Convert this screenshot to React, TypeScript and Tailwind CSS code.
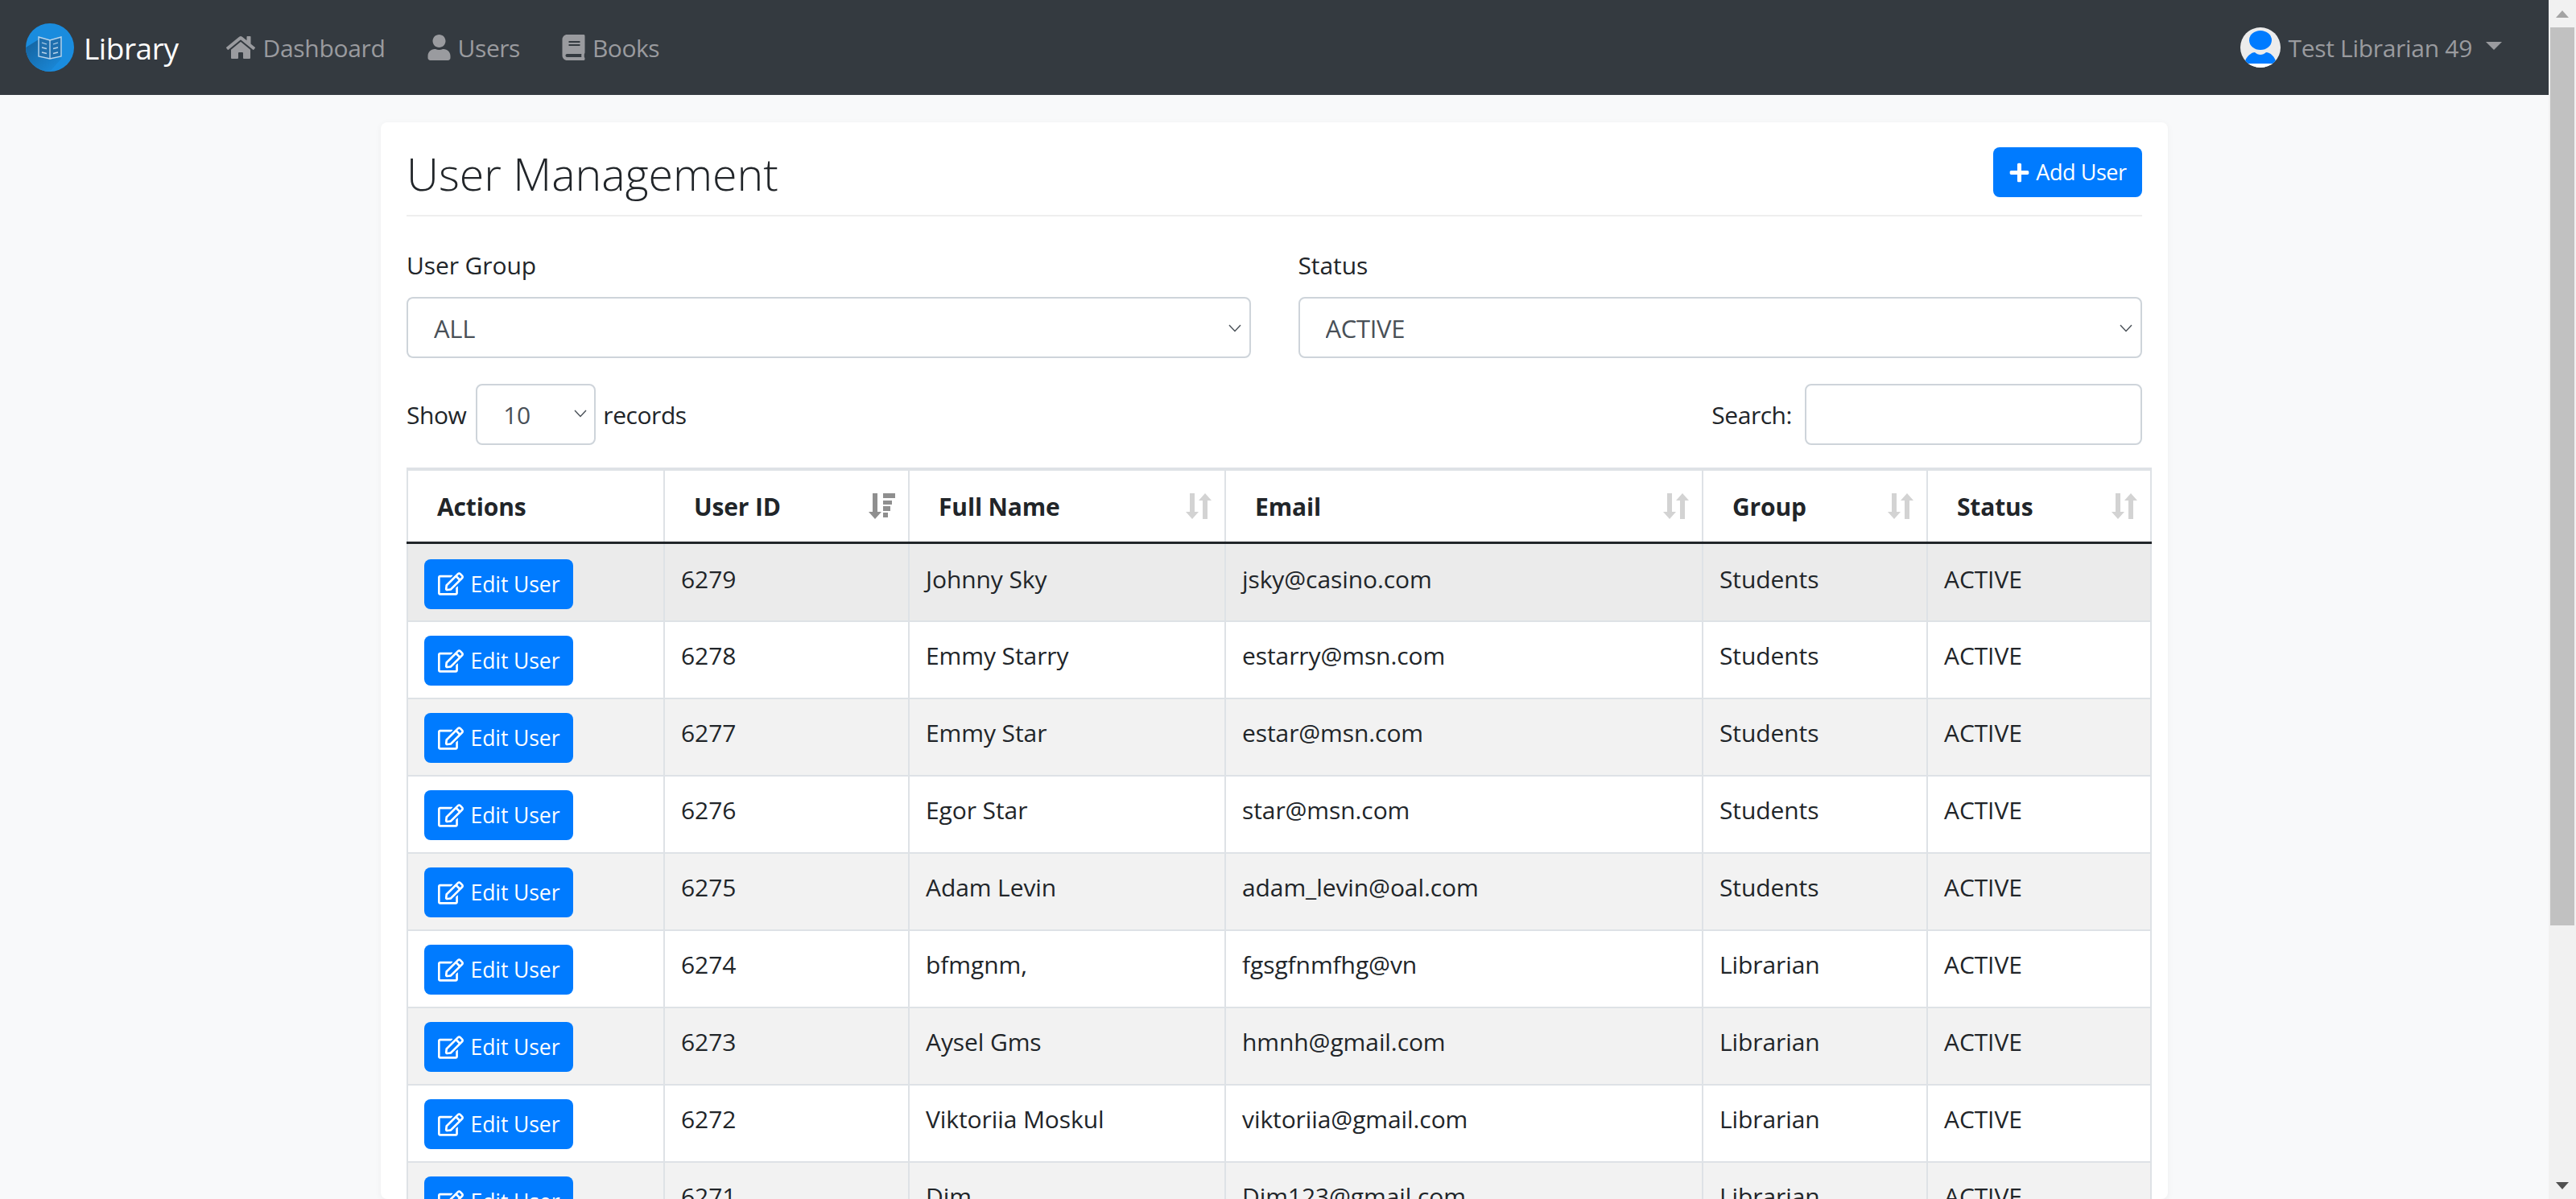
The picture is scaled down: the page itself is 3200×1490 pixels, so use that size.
import { FaHome, FaUser, FaBook, FaPlus, FaRegEdit } from "react-icons/fa";

const rows = [
  ["6279", "Johnny Sky", "jsky@casino.com", "Students"],
  ["6278", "Emmy Starry", "estarry@msn.com", "Students"],
  ["6277", "Emmy Star", "estar@msn.com", "Students"],
  ["6276", "Egor Star", "star@msn.com", "Students"],
  ["6275", "Adam Levin", "adam_levin@oal.com", "Students"],
  ["6274", "bfmgnm,", "fgsgfnmfhg@vn", "Librarian"],
  ["6273", "Aysel Gms", "hmnh@gmail.com", "Librarian"],
  ["6272", "Viktoriia Moskul", "viktoriia@gmail.com", "Librarian"],
  ["6271", "Dim", "Dim123@gmail.com", "Librarian"],
];

function Logo() {
  return (
    <svg viewBox="0 0 60 60" className="w-[60px] h-[60px] shrink-0">
      <defs>
        <linearGradient id="sh" x1="0" y1="0" x2="1" y2="1">
          <stop offset="0" stopColor="#15619c" />
          <stop offset="1" stopColor="#1a8cde" />
        </linearGradient>
      </defs>
      <circle cx="30" cy="30" r="30" fill="#1a8cde" />
      <path d="M16 20 L44 44 L30 60 A30 30 0 0 1 0 30 Z" fill="url(#sh)" />
      <g fill="#1f6fae" stroke="#b9d5ec" strokeWidth="1.4">
        <path d="M16 17 L30 21 L44 17 V41 L30 44 L16 41 Z" />
        <path d="M30 21 V44" fill="none" />
      </g>
      <g stroke="#b9d5ec" strokeWidth="1.3" fill="none">
        <path d="M20 24 L26 26 M20 30 L26 31.5 M20 36 L26 37.5 M34 26 L40 24 M34 31.5 L40 30 M34 37.5 L40 36" />
      </g>
    </svg>
  );
}

function Avatar() {
  return (
    <svg viewBox="0 0 50 50" className="w-[50px] h-[50px] shrink-0">
      <defs>
        <clipPath id="av"><circle cx="25" cy="25" r="25" /></clipPath>
      </defs>
      <g clipPath="url(#av)">
        <rect width="50" height="50" fill="#ececec" />
        <ellipse cx="25" cy="16" rx="14" ry="12" fill="#007bff" />
        <path d="M5 45 C7 36 14 31 18 31 C22 35 28 35 32 31 C37 31 43 36 45 45 Z" fill="#007bff" />
        <rect y="45" width="50" height="5" fill="#fff" />
      </g>
    </svg>
  );
}

function SortIcon() {
  return (
    <svg viewBox="0 0 32 32" className="w-[32px] h-[32px] shrink-0" fill="#d3d3d3">
      <path d="M5 0 H11 V23 H16 L8 32 L0 23 H5 Z" />
      <path d="M21 32 H27 V9 H32 L24 0 L16 9 H21 Z" />
    </svg>
  );
}

function SortedIcon() {
  return (
    <svg viewBox="0 0 33 32" className="w-[33px] h-[32px] shrink-0" fill="#8f8f8f">
      <path d="M5 0 H11 V23 H16 L8 32 L0 23 H5 Z" />
      <rect x="18" y="0" width="15" height="6" />
      <rect x="18" y="9" width="11" height="5" />
      <rect x="18" y="16" width="9" height="6" />
      <rect x="18" y="24" width="6" height="6" />
    </svg>
  );
}

function Chevron({ className }: { className: string }) {
  return (
    <svg viewBox="0 0 16 10" className={className} fill="none" stroke="#495057" strokeWidth="1.4">
      <path d="M1 1 L8 8.5 L15 1" />
    </svg>
  );
}

function FormSelect({ value }: { value: string }) {
  return (
    <div className="relative">
      <select className="w-full h-[76px] appearance-none bg-white border-2 border-[#ced4da] rounded-lg pl-[32px] pt-[2px] text-[#495057] text-[31px] tracking-[-0.01em] outline-none">
        <option>{value}</option>
      </select>
      <Chevron className="absolute right-[12px] top-[34px] w-[16px] h-[10px]" />
    </div>
  );
}

const thBase = "border-2 border-t-4 border-b-[3px] border-[#dee2e6] border-b-[#212529] h-[91px] p-0 text-left font-bold align-middle tracking-[-0.005em]";
const tdBase = "border-2 border-[#dee2e6] align-top px-[20px] pb-0 font-normal tracking-[-0.003em]";

function Th({ label, children }: { label: string; children?: React.ReactNode }) {
  return (
    <th className={thBase}>
      <div className="flex items-center justify-between pl-[36px] pr-[16px]">
        <span className="pt-[2px]">{label}</span>
        {children}
      </div>
    </th>
  );
}

export default function App() {
  return (
    <div className="h-screen flex overflow-hidden font-['Open_Sans',sans-serif] text-[#212529] text-[30px] leading-[48px] tracking-[-0.015em] bg-[#f8f9fa]">
      <div className="flex-1 min-w-0 flex flex-col">
        <nav className="h-[118px] shrink-0 bg-[#343a40] flex items-center pl-[32px] pr-[58px] text-[#9a9b9f]">
          <Logo />
          <span className="ml-[12px] text-white text-[37px] mr-[60px] pt-[2px]">Library</span>
          <a className="flex items-center gap-[9px] mr-[52px]"><FaHome className="w-[36px] h-[32px]" /><span className="pt-[2px] tracking-[-0.01em]">Dashboard</span></a>
          <a className="flex items-center gap-[9px] mr-[52px]"><FaUser className="w-[29px] h-[32px]" /><span className="pt-[2px]">Users</span></a>
          <a className="flex items-center gap-[9px]"><FaBook className="w-[29px] h-[32px]" /><span className="pt-[2px]">Books</span></a>
          <div className="ml-auto flex items-center">
            <Avatar />
            <span className="ml-[9px] tracking-[-0.01em] pt-[2px]">Test Librarian 49</span>
            <span className="ml-[17px] w-0 h-0 border-x-[10px] border-x-transparent border-t-[10px] border-t-[#9a9b9f] mb-[5px]" />
          </div>
        </nav>
        <main className="flex-1 min-h-0 flex justify-center pt-[34px]">
          <div className="w-[2220px] bg-white rounded-lg shadow-[0_2px_8px_rgba(0,0,0,0.05)] p-[32px]">
            <div className="flex items-center justify-between border-b-2 border-[#eeeeee] h-[85px] pb-[23px]">
              <h1 className="text-[55.5px] font-light leading-[62px] tracking-[0] pt-[3px]">User Management</h1>
              <button className="h-[62px] w-[185px] bg-[#007bff] rounded-lg text-white text-[27px] flex items-center justify-center gap-[7px]">
                <FaPlus className="w-[27px] h-[27px]" />Add User
              </button>
            </div>
            <div className="grid grid-cols-2 gap-x-[59px] mt-[37px]">
              <div>
                <label className="block mb-[15px] tracking-[-0.003em]">User Group</label>
                <FormSelect value="ALL" />
              </div>
              <div>
                <label className="block mb-[15px] tracking-[-0.003em]">Status</label>
                <FormSelect value="ACTIVE" />
              </div>
            </div>
            <div className="flex items-center justify-between mt-[32px]">
              <div className="flex items-center">
                <span className="pt-[2px]">Show</span>
                <div className="relative w-[149px] ml-[12px] mr-[9px]">
                  <select className="w-full h-[76px] appearance-none bg-white border-2 border-[#ced4da] rounded-lg pl-[32px] pt-[2px] text-[#495057] text-[30px] outline-none">
                    <option>10</option>
                  </select>
                  <Chevron className="absolute right-[11px] top-[32px] w-[16px] h-[10px]" />
                </div>
                <span className="pt-[2px]">records</span>
              </div>
              <div className="flex items-center gap-[16px]">
                <span className="pt-[2px]">Search:</span>
                <input className="w-[419px] h-[76px] bg-white border-2 border-[#ced4da] rounded-lg outline-none" />
              </div>
            </div>
            <table className="mt-[28px] table-fixed border-collapse w-[2166px]">
              <colgroup>
                <col className="w-[319px]" />
                <col className="w-[304px]" />
                <col className="w-[393px]" />
                <col className="w-[593px]" />
                <col className="w-[279px]" />
                <col className="w-[278px]" />
              </colgroup>
              <thead>
                <tr>
                  <Th label="Actions" />
                  <Th label="User ID"><SortedIcon /></Th>
                  <Th label="Full Name"><SortIcon /></Th>
                  <Th label="Email"><SortIcon /></Th>
                  <Th label="Group"><SortIcon /></Th>
                  <Th label="Status"><SortIcon /></Th>
                </tr>
              </thead>
              <tbody>
                {rows.map((r, i) => {
                  const td = i === 0 ? tdBase + " pt-[20px]" : tdBase + " pt-[18px]";
                  return (
                    <tr key={r[0]} className={i === 0 ? "bg-[#ebebeb] h-[98px]" : i % 2 === 0 ? "bg-[#f2f2f2] h-[96px]" : "bg-white h-[96px]"}>
                      <td className={td}>
                        <button className="-mt-[1px] h-[62px] w-[185px] bg-[#007bff] rounded-lg text-white text-[26.5px] flex items-center justify-center gap-[9px]">
                          <FaRegEdit className="w-[32px] h-[29px]" />Edit User
                        </button>
                      </td>
                      <td className={td}>{r[0]}</td>
                      <td className={td}>{r[1]}</td>
                      <td className={td}>{r[2]}</td>
                      <td className={td}>{r[3]}</td>
                      <td className={td}>ACTIVE</td>
                    </tr>
                  );
                })}
              </tbody>
            </table>
          </div>
        </main>
      </div>
      <div className="w-[34px] shrink-0 bg-[#f1f1f1] flex flex-col items-center">
        <div className="h-[34px] flex items-center justify-center">
          <span className="w-0 h-0 border-x-[8px] border-x-transparent border-b-[9px] border-b-[#a3a3a3]" />
        </div>
        <div className="w-[30px] h-[1116px] bg-[#c1c1c1]" />
        <div className="mt-auto h-[34px] flex items-center justify-center">
          <span className="w-0 h-0 border-x-[8px] border-x-transparent border-t-[9px] border-t-[#505050]" />
        </div>
      </div>
    </div>
  );
}
